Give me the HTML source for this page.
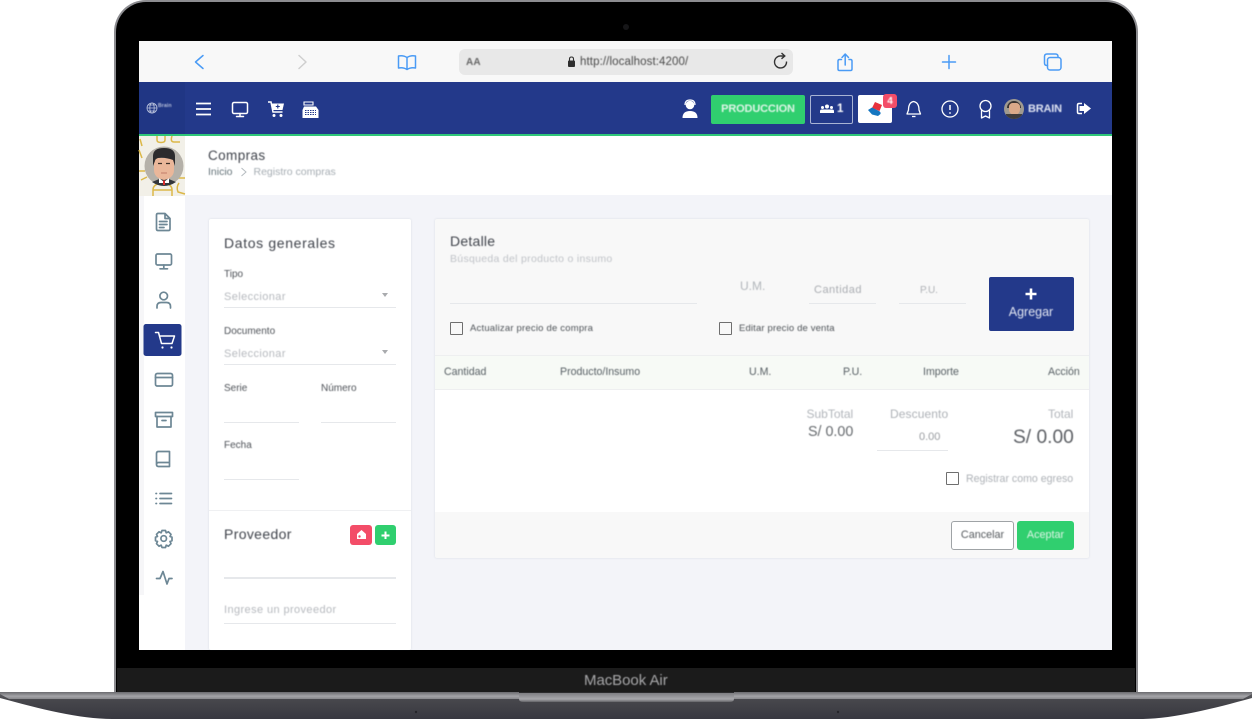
<!DOCTYPE html>
<html lang="es">
<head>
<meta charset="utf-8">
<title>Compras</title>
<style>
html,body{margin:0;padding:0;background:#fff;}
body{width:1252px;height:719px;overflow:hidden;position:relative;font-family:"Liberation Sans",sans-serif;}
.a{position:absolute;}
.t{position:absolute;white-space:nowrap;line-height:1;filter:blur(.4px);}
svg{position:absolute;overflow:visible;}
.ic{fill:none;stroke:#6d8795;stroke-width:1.7;stroke-linecap:round;stroke-linejoin:round;}
.wh{fill:none;stroke:#fff;stroke-width:1.5;stroke-linecap:round;stroke-linejoin:round;}
.bl{fill:none;stroke:#4a9bf5;stroke-width:1.5;stroke-linecap:round;stroke-linejoin:round;}
.ln{position:absolute;height:1px;background:#e6e8eb;}
.lab{font-size:10px;color:#4e5258;letter-spacing:0;}
.ph{font-size:11px;color:#b6b9be;letter-spacing:.4px;}
.h{font-size:14px;color:#40444c;letter-spacing:.55px;}
.th{font-size:10.6px;color:#575f64;top:366.500px;}
.cb{position:absolute;width:11px;height:11px;border:1.8px solid #6f6f6f;border-radius:1px;background:transparent;}
</style>
</head>
<body>

<!-- laptop lid -->
<div class="a" style="left:114px;top:0;width:1024px;height:694px;background:#8c8c90;border-radius:32px 32px 0 0;"></div>
<div class="a" style="left:116px;top:2px;width:1020px;height:692px;background:#000;border-radius:30px 30px 0 0;"></div>
<div class="a" style="left:117px;top:668px;width:1018px;height:24px;background:#1b1b1b;"></div>
<div class="a" style="left:623px;top:24px;width:6px;height:6px;border-radius:50%;background:#161618;"></div>
<div class="t" style="left:584px;top:673px;font-size:15px;color:#a8a8aa;letter-spacing:-.05px;">MacBook Air</div>

<!-- base -->
<svg style="left:0;top:692px;" width="1252" height="27" viewBox="0 0 1252 27">
<defs>
<linearGradient id="bs" x1="0" y1="0" x2="0" y2="1"><stop offset="0" stop-color="#626266"/><stop offset=".3" stop-color="#47474c"/><stop offset="1" stop-color="#383840"/></linearGradient>
<linearGradient id="st" x1="0" y1="0" x2="0" y2="1"><stop offset="0" stop-color="#6a6a6e"/><stop offset=".6" stop-color="#a4a4a8"/><stop offset="1" stop-color="#88888c"/></linearGradient>
<linearGradient id="no" x1="0" y1="0" x2="0" y2="1"><stop offset="0" stop-color="#77777b"/><stop offset=".7" stop-color="#a8a8ac"/><stop offset="1" stop-color="#636367"/></linearGradient>
</defs>
<path d="M0 0H1252V6C1212 17 1172 27 1140 27H112C80 27 40 17 0 6Z" fill="url(#bs)"/>
<path d="M0 0H1252V2L1243 7H9L0 2Z" fill="url(#st)"/>
<path d="M519 0H734V7Q734 10 729 10H524Q519 10 519 7Z" fill="url(#no)"/>
<rect x="519" y="0" width="215" height="1" fill="#2b2b2d"/>
<circle cx="416" cy="20" r="1.200" fill="#25252a"/><circle cx="838" cy="20" r="1.200" fill="#25252a"/>
</svg>

<!-- screen -->
<div class="a" style="left:139px;top:41px;width:973px;height:609px;background:#f3f4f9;overflow:hidden;"></div>

<!-- browser bar -->
<div class="a" style="left:139px;top:41px;width:973px;height:41px;background:#f8f8f8;"></div>
<div class="a" style="left:459px;top:49px;width:334px;height:26px;background:#e8e8e8;border-radius:6px;"></div>
<svg style="left:0;top:0;" width="1252" height="90">
<path class="bl" d="M203 55.500L195.500 62L203 68.500"/>
<path d="M299 55.500L306 62L299 68.500" fill="none" stroke="#cfcfcf" stroke-width="1.500" stroke-linecap="round" stroke-linejoin="round"/>
<path class="bl" d="M407 57.500C404 55.500 401 55.500 398.500 56V68C401 67.500 404 67.500 407 69.500C410 67.500 413 67.500 415.500 68V56C413 55.500 410 55.500 407 57.500ZM407 57.500V69.500"/>
<path class="bl" d="M841.500 59.500H839.500Q838 59.500 838 61V69Q838 70.500 839.500 70.500H850.500Q852 70.500 852 69V61Q852 59.500 850.500 59.500H849M845.200 65V54.500M842 57.500L845.200 54L848.500 57.500"/>
<path class="bl" d="M942.500 62H955.500M949 55.500V68.500"/>
<path class="bl" d="M1058 57V56.500Q1058 54 1055.500 54H1047Q1044.500 54 1044.500 56.500V63Q1044.500 65.500 1047 65.500H1047.500"/>
<rect class="bl" x="1047.500" y="57.500" width="13.500" height="12.500" rx="2.500"/>
<path d="M786.500 61.500A6 6 0 1 1 781 56H784M781.500 53L784.800 56L781.500 58.800" fill="none" stroke="#333" stroke-width="1.400"/>
<rect x="568" y="60.500" width="7" height="6.500" rx="1" fill="#2e2e2e"/>
<path d="M569.500 60.500V59Q569.500 57 571.500 57Q573.500 57 573.500 59V60.500" fill="none" stroke="#2e2e2e" stroke-width="1.100"/>
</svg>
<div class="t" style="left:466px;top:58px;font-size:10px;font-weight:bold;color:#666;letter-spacing:.2px;">AA</div>
<div class="t" style="left:580px;top:56.500px;font-size:11.500px;color:#4a4a4a;letter-spacing:.1px;">http://localhost:4200/</div>

<!-- header -->
<div class="a" style="left:139px;top:82px;width:973px;height:52px;background:#23398a;"></div>
<div class="a" style="left:139px;top:82px;width:46px;height:52px;background:#203684;"></div>
<div class="a" style="left:139px;top:134px;width:973px;height:2px;background:#2fc678;"></div>
<svg style="left:0;top:0;" width="1252" height="140">
<g fill="none" stroke="#b9c2dc" stroke-width=".8"><circle cx="152" cy="108" r="5"/><ellipse cx="152" cy="108" rx="2.200" ry="5"/><path d="M147 108H157M148 105H156M148 111H156"/></g>
<path d="M196 103.500H211M196 109H211M196 114.500H211" stroke="#fff" stroke-width="1.700" fill="none"/>
<rect class="wh" x="232.500" y="102.500" width="15" height="11" rx="1.500"/><path class="wh" d="M240 113.500V116.500M236.500 116.500H243.500"/>
<path d="M268 102H271L273 112H282.500" fill="none" stroke="#fff" stroke-width="1.500"/>
<path d="M271.500 103.500H284L282.500 110H272.800Z" fill="#fff"/><path d="M277.800 104.500V108.500M275.800 106.500H279.800" stroke="#23398a" stroke-width="1.100"/>
<circle cx="274" cy="115.500" r="1.500" fill="#fff"/><circle cx="281" cy="115.500" r="1.500" fill="#fff"/>
<path d="M304 102H313V105H304Z" fill="none" stroke="#fff" stroke-width="1.100"/>
<path d="M304 106.500H316L318.500 110V118H302.500V110Z" fill="#fff"/><path d="M305 110.500H316M305 112.500H316M305 114.500H316" stroke="#23398a" stroke-width=".9" stroke-dasharray="1.500 1"/>

<circle cx="690" cy="105" r="4.300" fill="#fff"/><path d="M682.500 118Q682.500 111 690 111Q697.500 111 697.500 118Z" fill="#fff"/><path d="M685 105Q685 100 690 100Q695 100 695 105" fill="none" stroke="#fff" stroke-width="1.200"/>

<path class="wh" d="M908.500 110Q908.500 102.500 913.500 101.500Q919 102.500 919 110L920.500 114H907Z" style="stroke-width:1.300"/><path d="M912 116.500H915.500" stroke="#fff" stroke-width="1.300"/>
<circle class="wh" cx="950" cy="109" r="8" style="stroke-width:1.300"/><path d="M950 105V110" stroke="#fff" stroke-width="1.500"/><circle cx="950" cy="113" r=".9" fill="#fff"/>
<circle class="wh" cx="985.500" cy="106" r="5.500" style="stroke-width:1.300"/><path class="wh" d="M981.500 110.500V118L985.500 116L989.500 118V110.500" style="stroke-width:1.300"/>
<path d="M1084 103V106H1079.500V111H1084V114L1091 108.500Z" fill="#fff"/><path d="M1082 103.500H1079Q1077.500 103.500 1077.500 105V112Q1077.500 113.500 1079 113.500H1082" fill="none" stroke="#fff" stroke-width="1.500"/>
</svg>

<div class="a" style="left:711px;top:95px;width:94px;height:29px;background:#30cf6f;border-radius:2px;"></div>
<div class="t" style="left:711px;top:103.500px;width:94px;text-align:center;font-size:11px;font-weight:bold;color:#dff5e7;letter-spacing:-.15px;">PRODUCCION</div>
<div class="a" style="left:810px;top:95px;width:41px;height:27px;border:1px solid #a8b3d4;border-radius:2px;"></div>
<svg style="left:820px;top:104px;" width="15" height="10"><circle cx="7" cy="2.500" r="2" fill="#fff"/><circle cx="2.500" cy="3.500" r="1.500" fill="#fff"/><circle cx="11.500" cy="3.500" r="1.500" fill="#fff"/><path d="M0 9V7Q0 5.500 2 5.500H12Q14 5.500 14 7V9Z" fill="#fff"/></svg>
<div class="t" style="left:837px;top:103.500px;font-size:11.500px;font-weight:bold;color:#fff;">1</div>
<div class="a" style="left:858px;top:95px;width:34px;height:28px;background:#fff;border-radius:2px;"></div>
<svg style="left:866px;top:99px;" width="22" height="22"><path d="M9 3L16 6L13.500 12L6 9Z" fill="#e8323d"/><path d="M2 11L6 8.500L13 12Q15 13 14.500 15L12 17L6 15.500Z" fill="#1576c0"/></svg>
<div class="a" style="left:883px;top:94px;width:14px;height:14px;background:#f34d68;border-radius:3px;"></div>
<div class="t" style="left:883px;top:97px;width:14px;text-align:center;font-size:10px;font-weight:bold;color:#fff;">4</div>
<div class="a" style="left:1004px;top:99px;width:20px;height:20px;border-radius:50%;background:#a09a90;overflow:hidden;">
  <div class="a" style="left:3px;top:2px;width:14px;height:7px;background:#3a3532;border-radius:7px 7px 0 0;"></div>
  <div class="a" style="left:4.500px;top:4px;width:11px;height:12px;background:#dba989;border-radius:4px 4px 6px 6px;"></div>
  <div class="a" style="left:2px;top:15px;width:16px;height:6px;background:#3f3c3c;"></div>
</div>
<div class="t" style="left:1028px;top:103.500px;font-size:11px;color:#dde2f1;letter-spacing:-.2px;font-weight:bold;">BRAIN</div>
<div class="t" style="left:158px;top:104px;font-size:5px;color:#b9c2dc;font-weight:bold;letter-spacing:.2px;">Brain</div>

<!-- page head -->
<div class="a" style="left:185px;top:136px;width:927px;height:59px;background:#fff;"></div>
<div class="t" style="left:208px;top:149px;font-size:13.500px;color:#40444c;letter-spacing:.4px;">Compras</div>
<div class="t" style="left:208px;top:166.500px;font-size:10.500px;color:#66747a;">Inicio</div>
<svg style="left:240px;top:167px;" width="8" height="10"><path d="M1.500 1L6 5L1.500 9" fill="none" stroke="#b6bcc0" stroke-width="1"/></svg>
<div class="t" style="left:253.500px;top:166.500px;font-size:10.500px;color:#a6adb3;">Registro compras</div>

<!-- sidebar -->
<div class="a" style="left:139px;top:136px;width:46px;height:514px;background:#fff;"></div>
<div class="a" style="left:139px;top:196px;width:5px;height:399px;background:#f6f6f8;"></div>
<svg style="left:139px;top:136px;" width="46" height="60" viewBox="0 0 46 60">
<rect width="46" height="60" fill="#f2f0e8"/>
<g fill="none" stroke="#dcb848" stroke-width="1.500">
<path d="M18 0V4Q18 6.500 22 6.500Q26 6.500 26 4V0M33 0Q31 6 35 6H41"/>
<path d="M1 3L3 10M0 14L3 22M0 35H6M2 44L8 41"/>
<path d="M14 60V54Q14 47.500 23.500 47.500Q33 47.500 33 54V60M13.500 54H33"/>
<path d="M40 47Q37 51 39 56L46 58M38 36V32H44M38 42H46"/>
</g>
<circle cx="25" cy="30" r="19.500" fill="#b5b1a9"/>
<path d="M13 46L25 41L37 46Q31 50 25 50Q19 50 13 46Z" fill="#33363b"/>
<path d="M20 42L25 46L30 42V47H20Z" fill="#fff"/><path d="M24 44.500H26V49H24Z" fill="#d92c2c"/>
<path d="M15 22H35V34Q35 42 25 44Q15 42 15 34Z" fill="#eab79a"/>
<path d="M14 30V20Q14 12 25 12Q36 12 36 20V30L34 24Q26 21 19 22Q16 23 16 25Z" fill="#2c2b2d"/>
<path d="M19 27.500H23M27 27.500H31" stroke="#3b2d26" stroke-width="1.300"/>
<path d="M22 37H28" stroke="#c27e6b" stroke-width="1"/>
</svg>
<svg style="left:139px;top:196px;" width="46" height="420">
<!-- doc -->
<path class="ic" d="M19 17.500H26L31 22.500V33Q31 34.500 29.500 34.500H19Q17.500 34.500 17.500 33V19Q17.500 17.500 19 17.500ZM26 17.500V22.500H31M20.500 25.500H28M20.500 28.500H28M20.500 31.500H25"/>
<!-- monitor -->
<rect class="ic" x="17" y="58" width="15.500" height="11" rx="1.500"/><path class="ic" d="M24.800 69V72.500M21 72.800H28.500"/>
<!-- user -->
<circle class="ic" cx="24.700" cy="100" r="3.800"/><path class="ic" d="M18 112V110.500Q18 106.500 22 106.500H27.500Q31.500 106.500 31.500 110.500V112"/>
<!-- cart active -->
<rect x="4.500" y="128" width="38" height="32" rx="2.500" fill="#23398a"/>
<path class="wh" d="M16.500 136.500H19.500L22.500 147.500H33L35.500 140H20.500"/><circle cx="23.500" cy="151.500" r="1.100" fill="#fff"/><circle cx="32.500" cy="151.500" r="1.100" fill="#fff"/>
<!-- card -->
<rect class="ic" x="16.500" y="177.500" width="17" height="12.500" rx="1.800"/><path class="ic" d="M16.500 181.500H33.500"/>
<!-- archive -->
<rect class="ic" x="16.500" y="216.500" width="17" height="4"/><path class="ic" d="M18 220.500V231H32V220.500M23 224.500H27"/>
<!-- book -->
<path class="ic" d="M19.500 255.500H30.500V270.500H19.500Q17.500 270.500 17.500 268.500V257.500Q17.500 255.500 19.500 255.500ZM17.500 268.500Q17.500 266.500 19.500 266.500H30.500"/>
<!-- list -->
<path class="ic" d="M21 297.500H32.500M21 302.500H32.500M21 307.500H32.500M17 297.500H17.500M17 302.500H17.500M17 307.500H17.500"/>
<!-- gear -->
<circle class="ic" cx="24.700" cy="342.500" r="2.800"/>
<path class="ic" d="M23 334.500H26.500L27.200 336.800L29.500 335.800L32 338.300L31 340.500L33 341.200V344.700L31 345.400L32 347.700L29.500 350.200L27.200 349.200L26.500 351.500H23L22.200 349.200L20 350.200L17.500 347.700L18.500 345.400L16.500 344.700V341.200L18.500 340.500L17.500 338.300L20 335.800L22.200 336.800Z"/>
<!-- activity -->
<path class="ic" d="M17.500 382.500H21L24 375.500L28 388L30 382.500H33"/>
</svg>

<!-- left card -->
<div class="a" style="left:208.500px;top:219px;width:202.500px;height:431px;background:#fff;border-radius:2px;box-shadow:0 0 2px rgba(60,70,100,.14);"></div>
<div class="a" style="left:208.500px;top:510px;width:202.500px;height:1px;background:#eff0f2;"></div>
<div class="t h" style="left:224px;top:236px;letter-spacing:.65px;">Datos generales</div>
<div class="t lab" style="left:224px;top:269.500px;">Tipo</div>
<div class="t ph" style="left:224px;top:291.500px;">Seleccionar</div>
<div class="ln" style="left:224px;top:307px;width:172px;"></div>
<div class="a" style="left:382px;top:293px;width:0;height:0;border:3.500px solid transparent;border-top:4px solid #a9abae;"></div>
<div class="t lab" style="left:224px;top:326.500px;">Documento</div>
<div class="t ph" style="left:224px;top:348.500px;">Seleccionar</div>
<div class="ln" style="left:224px;top:364px;width:172px;"></div>
<div class="a" style="left:382px;top:350px;width:0;height:0;border:3.500px solid transparent;border-top:4px solid #a9abae;"></div>
<div class="t lab" style="left:224px;top:383.500px;">Serie</div>
<div class="t lab" style="left:321px;top:383.500px;">Número</div>
<div class="ln" style="left:224px;top:421.500px;width:75px;"></div>
<div class="ln" style="left:321px;top:421.500px;width:75px;"></div>
<div class="t lab" style="left:224px;top:440.500px;">Fecha</div>
<div class="ln" style="left:224px;top:478.500px;width:75px;"></div>
<div class="t h" style="left:224px;top:527px;letter-spacing:.35px;">Proveedor</div>
<div class="a" style="left:350px;top:525px;width:22px;height:20px;background:#f34d68;border-radius:3px;"></div>
<svg style="left:356px;top:530px;" width="11" height="10"><path d="M5.500 0L10 4V9H1V4Z" fill="#fff"/><circle cx="3.500" cy="6.500" r="1.200" fill="#f34d68"/></svg>
<div class="a" style="left:375px;top:525px;width:21px;height:20px;background:#30cf6f;border-radius:3px;"></div>
<svg style="left:381px;top:531px;" width="9" height="9"><path d="M4.500 .5V8M.5 4.500H8.500" stroke="#fff" stroke-width="2"/></svg>
<div class="ln" style="left:224px;top:577px;width:172px;height:1.500px;"></div>
<div class="t ph" style="left:224px;top:604.500px;">Ingrese un proveedor</div>
<div class="ln" style="left:224px;top:622.500px;width:172px;"></div>

<!-- detail card -->
<div class="a" style="left:435px;top:219px;width:654px;height:339px;background:#f8f8f8;border-radius:2px;box-shadow:0 0 2px rgba(60,70,100,.14);"></div>
<div class="a" style="left:435px;top:355px;width:654px;height:35px;background:#f7faf6;border-top:1px solid #eeeff0;border-bottom:1px solid #eeeff0;box-sizing:border-box;"></div>
<div class="a" style="left:435px;top:390px;width:654px;height:122px;background:#fff;"></div>
<div class="t h" style="left:450px;top:234px;letter-spacing:.25px;">Detalle</div>
<div class="t" style="left:450px;top:254px;font-size:10.500px;color:#c0c3c8;letter-spacing:.3px;">Búsqueda del producto o insumo</div>
<div class="ln" style="left:450px;top:302.500px;width:247px;"></div>
<div class="t" style="left:740px;top:279.500px;font-size:12px;color:#b2b6bb;">U.M.</div>
<div class="t" style="left:814px;top:285px;font-size:11px;color:#aaadb2;letter-spacing:.5px;">Cantidad</div>
<div class="ln" style="left:809px;top:303px;width:67px;"></div>
<div class="t" style="left:920px;top:285.500px;font-size:10px;color:#aeb1b5;letter-spacing:-.1px;">P.U.</div>
<div class="ln" style="left:899px;top:303px;width:67px;"></div>
<div class="a" style="left:988.500px;top:277px;width:85px;height:53.500px;background:#23398a;border-radius:2px;"></div>
<svg style="left:1025px;top:288px;" width="12" height="12"><path d="M6 .5V11.500M.5 6H11.500" stroke="#fff" stroke-width="2.600"/></svg>
<div class="t" style="left:988.500px;top:306px;width:85px;text-align:center;font-size:12.500px;color:#e3e7f2;">Agregar</div>
<div class="cb" style="left:450px;top:322px;"></div>
<div class="t" style="left:470px;top:323.500px;font-size:9.500px;color:#4e5358;letter-spacing:.2px;">Actualizar precio de compra</div>
<div class="cb" style="left:719px;top:322px;"></div>
<div class="t" style="left:739px;top:323.500px;font-size:9.500px;color:#4e5358;letter-spacing:.15px;">Editar precio de venta</div>
<div class="t th" style="left:444px;">Cantidad</div>
<div class="t th" style="left:560px;">Producto/Insumo</div>
<div class="t th" style="left:749px;">U.M.</div>
<div class="t th" style="left:843px;">P.U.</div>
<div class="t th" style="left:923px;">Importe</div>
<div class="t th" style="left:1048px;">Acción</div>
<div class="t" style="left:806.500px;top:408px;font-size:12px;color:#b2b6bb;">SubTotal</div>
<div class="t" style="left:808px;top:425px;font-size:14.300px;color:#666a6e;">S/ 0.00</div>
<div class="t" style="left:890px;top:408px;font-size:12px;color:#adb1b6;letter-spacing:.1px;">Descuento</div>
<div class="t" style="left:919px;top:431.500px;font-size:11px;color:#999ca0;">0.00</div>
<div class="ln" style="left:877px;top:449.500px;width:71px;"></div>
<div class="t" style="left:1048px;top:408px;font-size:12px;color:#b2b6bb;">Total</div>
<div class="t" style="left:1013px;top:427.500px;font-size:19.200px;color:#5c5f64;">S/ 0.00</div>
<div class="cb" style="left:946px;top:472px;"></div>
<div class="t" style="left:966px;top:474px;font-size:10.600px;color:#adb1b6;">Registrar como egreso</div>
<div class="a" style="left:951px;top:520.500px;width:63px;height:29px;background:#fff;border:1px solid #9fa3a6;border-radius:3px;box-sizing:border-box;"></div>
<div class="t" style="left:951px;top:530px;width:63px;text-align:center;font-size:10.800px;color:#555a5e;">Cancelar</div>
<div class="a" style="left:1017px;top:520.500px;width:57px;height:29px;background:#30cf6f;border-radius:3px;"></div>
<div class="t" style="left:1017px;top:530px;width:57px;text-align:center;font-size:10.800px;color:#dff5e7;">Aceptar</div>

</body>
</html>
